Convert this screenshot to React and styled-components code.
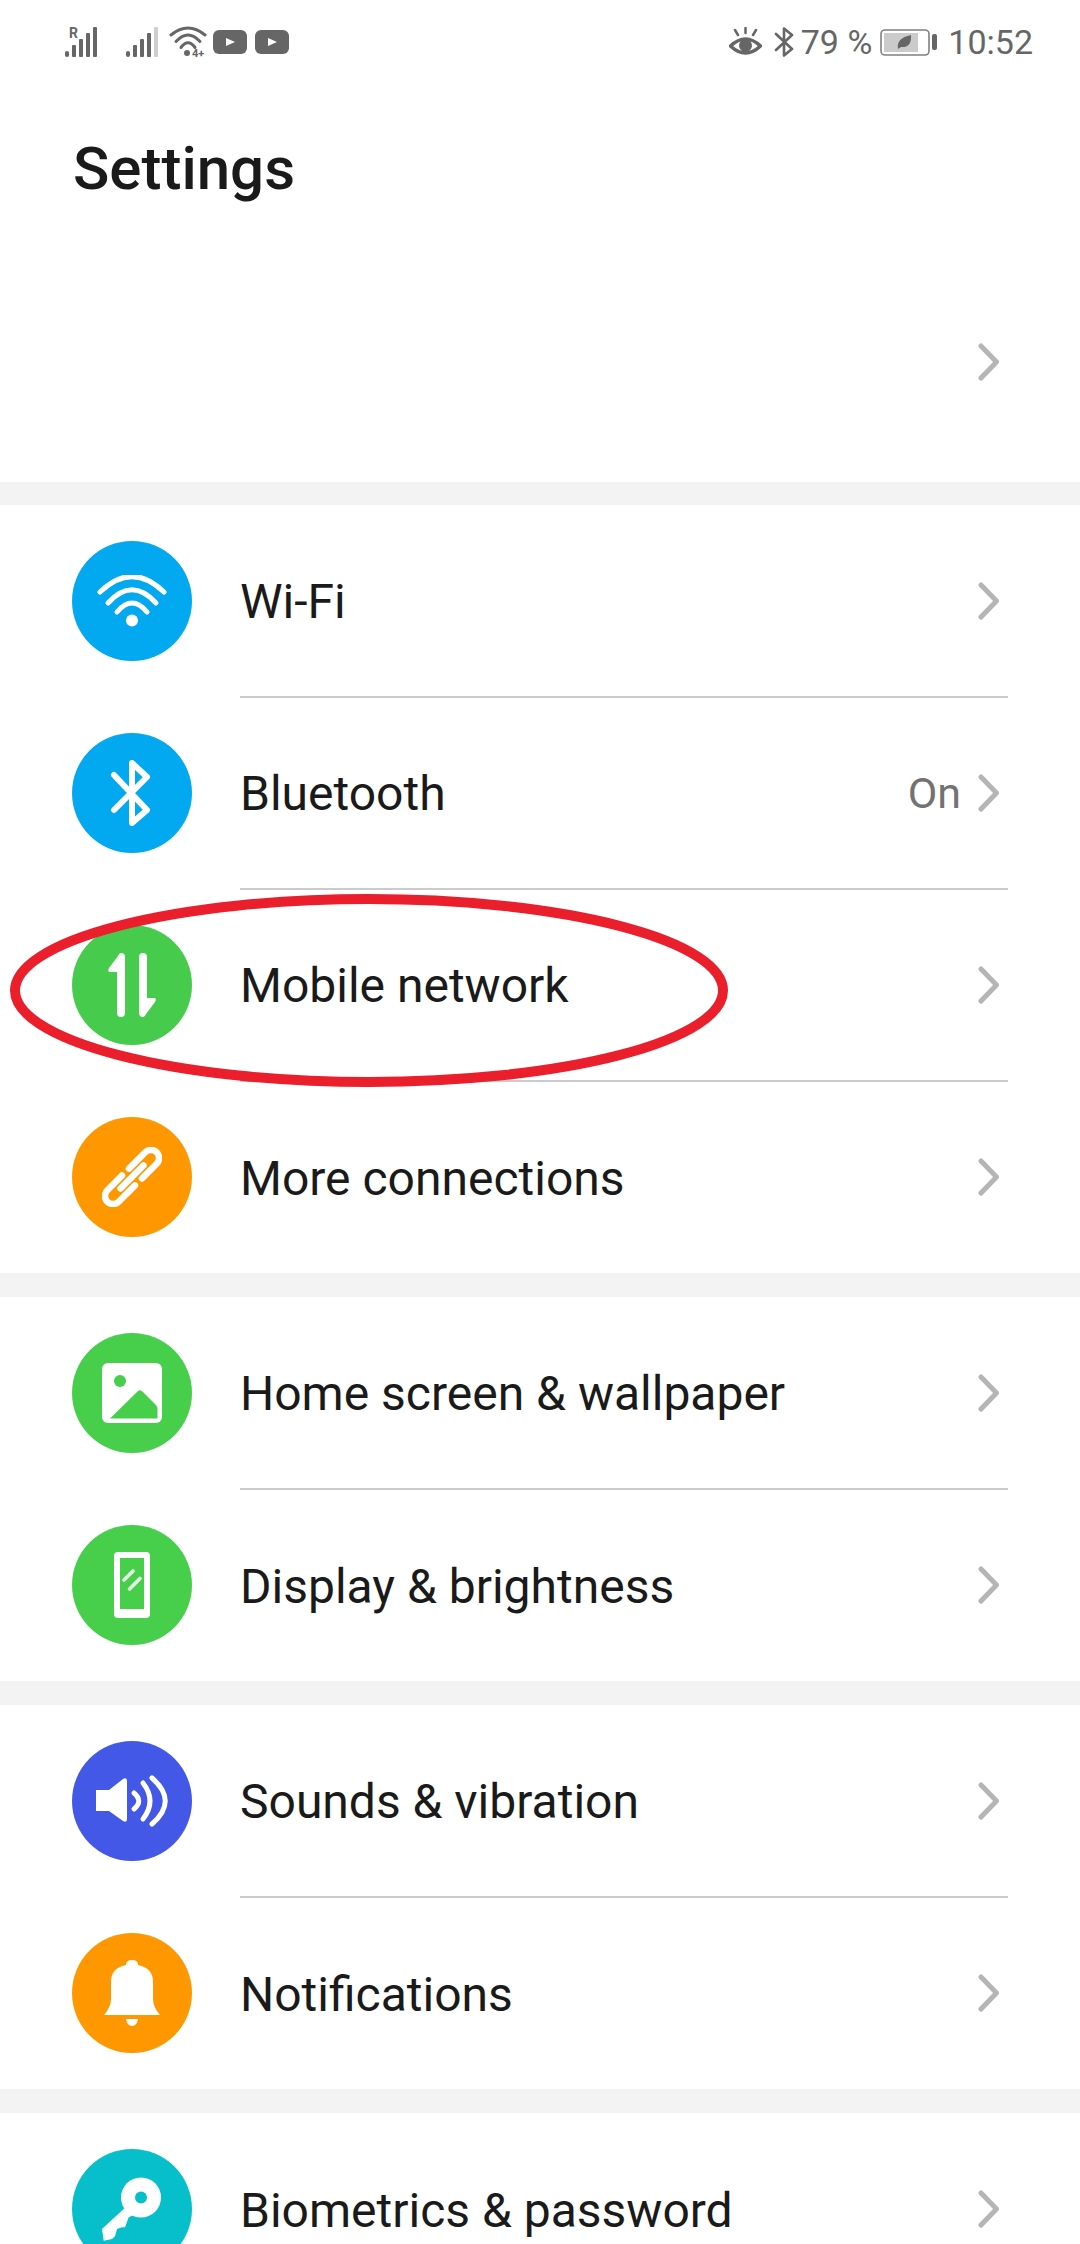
import React from 'react'
import styled, { createGlobalStyle } from 'styled-components'

const GlobalStyle = createGlobalStyle`
  html, body {
    margin: 0;
    padding: 0;
    background: #fff;
  }
  * {
    box-sizing: border-box;
  }
`

const Page = styled.div`
  position: relative;
  width: 1080px;
  height: 2244px;
  overflow: hidden;
  background: #f3f3f3;
  font-family: Roboto, "Liberation Sans", sans-serif;
  color: #1a1a1a;
`

const Header = styled.header`
  height: 482px;
  background: #fff;
  display: flex;
  flex-direction: column;
`

const StatusBar = styled.div`
  height: 84px;
  padding: 0 47px 0 65px;
  display: flex;
  align-items: center;
  justify-content: space-between;
  color: #666;
`

const StatusGroup = styled.div`
  display: flex;
  align-items: center;
`

const StatusText = styled.span`
  font-size: 34px;
  color: #666;
  margin-left: ${props => props.$left}px;
`

const StatusSlot = styled.span`
  display: flex;
  margin-left: ${props => props.$left}px;
`

const Title = styled.h1`
  margin: 51px 0 0 73px;
  font-size: 60px;
  line-height: 68px;
  font-weight: 500;
  color: #1a1a1a;
`

const AccountRow = styled.div`
  flex: 1;
  display: flex;
  align-items: flex-start;
  justify-content: flex-end;
  padding: 140px 80px 0 0;
`

const Section = styled.section`
  background: #fff;
  margin-top: 24px;
  &:first-of-type {
    margin-top: 23px;
  }
`

const Row = styled.div`
  height: 192px;
  display: flex;
  align-items: center;
  padding-left: 72px;
`

const Circle = styled.div`
  flex: none;
  width: 120px;
  height: 120px;
  border-radius: 50%;
  background: ${props => props.$color};
  display: flex;
  align-items: center;
  justify-content: center;
`

const RowBody = styled.div`
  flex: 1;
  align-self: stretch;
  margin: 0 72px ${props => (props.$divider ? '-1px' : '0')} 48px;
  display: flex;
  align-items: center;
  justify-content: space-between;
  border-bottom: ${props => (props.$divider ? '2px solid #cbcbcb' : '0')};
`

const Label = styled.span`
  font-size: 48px;
  padding-top: 2px;
  color: #1a1a1a;
`

const RowEnd = styled.div`
  display: flex;
  align-items: center;
  padding-right: 8px;
`

const Value = styled.span`
  font-size: 43px;
  color: #727272;
  margin-right: 17px;
`

const Ring = styled.svg`
  position: absolute;
  left: 0;
  top: 880px;
`

const Chevron = () => (
  <svg width="22" height="38" viewBox="0 0 22 38">
    <path d="M3 3 L18.5 19 L3 35" fill="none" stroke="#b5b5b5" strokeWidth="5" strokeLinecap="round" strokeLinejoin="round" />
  </svg>
)

const WifiIcon = () => (
  <svg width="70" height="52" viewBox="0 0 70 52" fill="none" stroke="#fff" strokeWidth="5" strokeLinecap="round">
    <path d="M3 17 Q35 -14 67 17" />
    <path d="M11 28 Q35 1.5 59 28" />
    <path d="M20 37 Q35 19 50 37" />
    <circle cx="35" cy="45.5" r="6" fill="#fff" stroke="none" />
  </svg>
)

const BluetoothIcon = () => (
  <svg width="44" height="66" viewBox="0 0 44 66" fill="none" stroke="#fff" strokeWidth="6" strokeLinecap="round" strokeLinejoin="round">
    <path d="M4 15 L37 50 L22 63 V3 L37 17 L4 50" />
  </svg>
)

const ArrowsIcon = () => (
  <svg width="48" height="64" viewBox="0 0 48 64" fill="#fff">
    <path d="M10 3 Q11 0 13 0 Q17 0 17 4 V60 Q17 64 13 64 Q9 64 9 60 V19 H2 Q-1 19 1 15 Z" />
    <path d="M38 61 Q37 64 35 64 Q31 64 31 60 V4 Q31 0 35 0 Q39 0 39 4 V45 H46 Q49 45 47 49 Z" />
  </svg>
)

const LinkIcon = () => (
  <svg width="60" height="60" viewBox="0 0 60 60" fill="none" stroke="#fff" strokeWidth="6.5" strokeLinecap="round">
    <path d="M27 21.6 L43.3 5.3 A8 8 0 0 1 54.7 16.7 L40 31.5" />
    <path d="M33 38.4 L16.7 54.7 A8 8 0 0 1 5.3 43.3 L20 28.5" />
    <path d="M18.5 41.5 L41.5 18.5" />
  </svg>
)

const PictureIcon = ({ color }) => (
  <svg width="60" height="60" viewBox="0 0 60 60">
    <rect width="60" height="60" rx="6" fill="#fff" />
    <circle cx="18" cy="18" r="6" fill={color} />
    <path d="M8 55.5 L35.5 28.5 Q38 26 41 29 L53 41 Q55.5 43.5 55.5 46 V55.5 Z" fill={color} />
  </svg>
)

const PhoneIcon = ({ color }) => (
  <svg width="36" height="66" viewBox="0 0 36 66">
    <rect width="36" height="66" rx="4" fill="#fff" />
    <rect x="6" y="6" width="24" height="51" fill={color} />
    <path d="M10 28 L19 19 M15.5 37 L26 26.5" stroke="#fff" strokeWidth="3.6" strokeLinecap="round" opacity="0.85" />
  </svg>
)

const SpeakerIcon = () => (
  <svg width="72" height="52" viewBox="0 0 72 52">
    <path d="M0 15 H13 L27 4 Q31 2 31 6 V44 Q31 48 27 46 L13 36 H0 Z" fill="#fff" />
    <g fill="none" stroke="#fff" strokeWidth="5" strokeLinecap="round">
      <path d="M38 18 Q47.5 26 38 34" />
      <path d="M47 8 Q61 26 47 44" />
      <path d="M56 3 Q82.5 26 56 49" />
    </g>
  </svg>
)

const BellIcon = () => (
  <svg width="56" height="66" viewBox="0 0 56 66" fill="#fff">
    <path d="M0 55 Q7 47 7 39 V22 Q7 8 22 5 Q22 0 28 0 Q34 0 34 5 Q49 8 49 22 V39 Q49 47 56 55 Z" />
    <path d="M22 59 H34 Q33 66 28 66 Q23 66 22 59 Z" />
  </svg>
)

const KeyIcon = ({ color }) => (
  <svg width="60" height="65" viewBox="0 0 60 65">
    <path d="M0 52 L26 28 L36 36 L26.7 40.3 L23 50.3 L20 50.3 L15 52 L13 59.3 L10 62 L1.7 63.7 Z" fill="#fff" />
    <circle cx="39" cy="20.5" r="20" fill="#fff" />
    <circle cx="39" cy="20.5" r="6" fill={color} />
  </svg>
)

const SignalIcon = ({ dim, roaming }) => (
  <svg width="33" height="40" viewBox="0 -5 33 40">
    {roaming && <text x="4" y="11" fontSize="14" fontWeight="700" fontFamily="Roboto, sans-serif" fill="#666">R</text>}
    <g fill="#666">
      <rect x="0" y="24" width="4" height="6" rx="2" />
      <rect x="7" y="18" width="4" height="12" rx="1" />
      <rect x="14" y="12" width="4" height="18" rx="1" />
      <rect x="21" y="6" width="4" height="24" rx="1" />
      <rect x="28" y="0" width="4" height="30" rx="1" fill={dim ? '#cfcfcf' : '#666'} />
    </g>
  </svg>
)

const StatusWifi = () => (
  <svg width="38" height="40" viewBox="0 -5 38 40" fill="none" stroke="#666" strokeWidth="3" strokeLinecap="round">
    <path d="M2 8 Q19 -6 36 8" />
    <path d="M7 14.5 Q19 1.5 31 14.5" />
    <path d="M12 20.5 Q19 11 26 20.5" />
    <circle cx="18" cy="26" r="3" fill="#666" stroke="none" />
    <text x="23" y="30" fontSize="11" fontWeight="700" fontFamily="Roboto, sans-serif" fill="#666" stroke="none">4+</text>
  </svg>
)

const PlayBadge = () => (
  <svg width="34" height="24" viewBox="0 0 34 24">
    <rect width="34" height="24" rx="6" fill="#666" />
    <path d="M13 8 L22 12 L13 16 Z" fill="#fff" />
  </svg>
)

const EyeIcon = () => (
  <svg width="33" height="30" viewBox="0 0 33 30">
    <path d="M1.5 19 Q16.5 5 31.5 19 Q16.5 33 1.5 19 Z" fill="none" stroke="#666" strokeWidth="3.5" />
    <circle cx="16.5" cy="18.5" r="6.5" fill="#666" />
    <path d="M16.5 1 V6 M6 3 L9 8 M27 3 L24 8" stroke="#666" strokeWidth="2.5" strokeLinecap="round" />
  </svg>
)

const StatusBluetooth = () => (
  <svg width="20" height="30" viewBox="0 0 20 30" fill="none" stroke="#666" strokeWidth="2.6" strokeLinejoin="round" strokeLinecap="round">
    <path d="M2 7 L18 22 L10 28.5 V1.5 L18 8 L2 23" />
  </svg>
)

const BatteryIcon = () => (
  <svg width="57" height="27" viewBox="0 0 57 27">
    <rect x="1" y="1" width="48" height="25" rx="4" fill="none" stroke="#808080" strokeWidth="1.6" />
    <rect x="4" y="4" width="34" height="19" fill="#cbcbcb" />
    <path d="M18 20 Q16 9 31 6 Q32 19 21 18 Z" fill="#666" />
    <rect x="52" y="5" width="5" height="16" rx="2" fill="#666" />
  </svg>
)

const sections = [
  [
    { label: 'Wi-Fi', color: '#03a9f0', Icon: WifiIcon },
    { label: 'Bluetooth', color: '#03a9f0', Icon: BluetoothIcon, value: 'On' },
    { label: 'Mobile network', color: '#47cb4c', Icon: ArrowsIcon },
    { label: 'More connections', color: '#ff9800', Icon: LinkIcon },
  ],
  [
    { label: 'Home screen & wallpaper', color: '#47cf4c', Icon: PictureIcon },
    { label: 'Display & brightness', color: '#47cf4c', Icon: PhoneIcon },
  ],
  [
    { label: 'Sounds & vibration', color: '#4458e8', Icon: SpeakerIcon },
    { label: 'Notifications', color: '#ff9800', Icon: BellIcon },
  ],
  [
    { label: 'Biometrics & password', color: '#07bfcb', Icon: KeyIcon },
  ],
]

export default function App() {
  return (
    <Page>
      <GlobalStyle />
      <Header>
        <StatusBar>
          <StatusGroup>
            <SignalIcon roaming />
            <StatusSlot $left={28}><SignalIcon dim /></StatusSlot>
            <StatusSlot $left={10}><StatusWifi /></StatusSlot>
            <StatusSlot $left={6}><PlayBadge /></StatusSlot>
            <StatusSlot $left={8}><PlayBadge /></StatusSlot>
          </StatusGroup>
          <StatusGroup>
            <EyeIcon />
            <StatusSlot $left={12}><StatusBluetooth /></StatusSlot>
            <StatusText $left={7}>79 %</StatusText>
            <StatusSlot $left={8}><BatteryIcon /></StatusSlot>
            <StatusText $left={11}>10:52</StatusText>
          </StatusGroup>
        </StatusBar>
        <Title>Settings</Title>
        <AccountRow>
          <Chevron />
        </AccountRow>
      </Header>
      {sections.map((rows, i) => (
        <Section key={i}>
          {rows.map((row, j) => (
            <Row key={row.label}>
              <Circle $color={row.color}>
                <row.Icon color={row.color} />
              </Circle>
              <RowBody $divider={j < rows.length - 1}>
                <Label>{row.label}</Label>
                <RowEnd>
                  {row.value && <Value>{row.value}</Value>}
                  <Chevron />
                </RowEnd>
              </RowBody>
            </Row>
          ))}
        </Section>
      ))}
      <Ring width="740" height="220" viewBox="0 0 740 220">
        <ellipse cx="369" cy="110.5" rx="354" ry="91.5" fill="none" stroke="#ea1f2b" strokeWidth="10" />
      </Ring>
    </Page>
  )
}
